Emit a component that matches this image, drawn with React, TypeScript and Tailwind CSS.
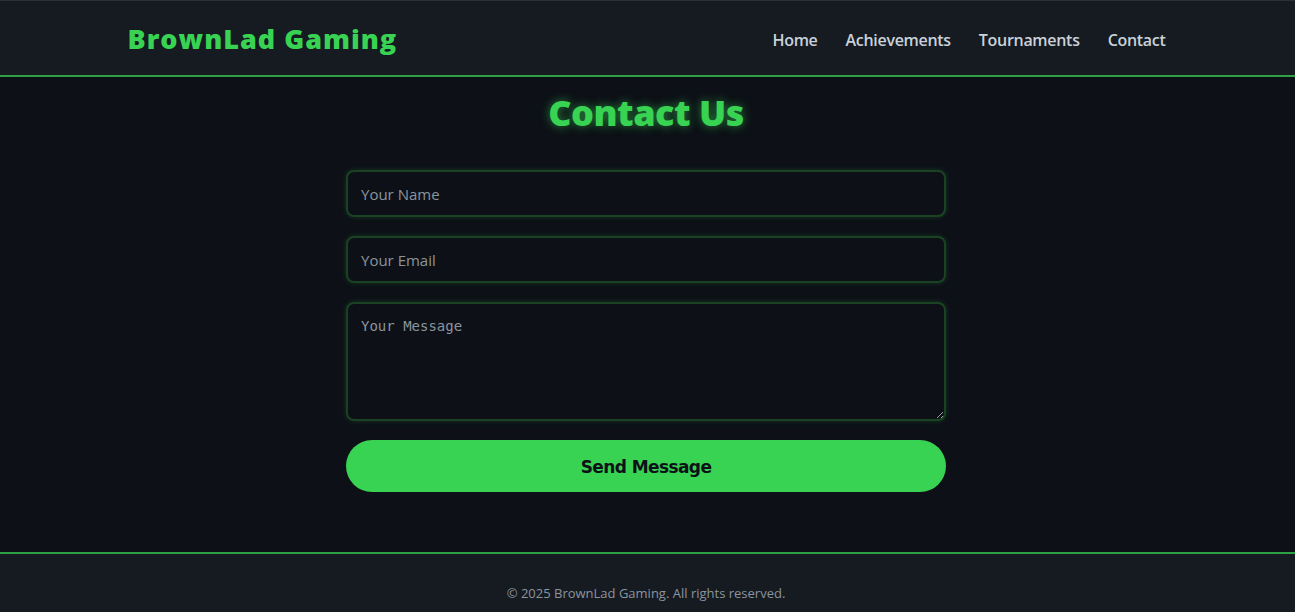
import React from 'react';

const links = ["Home", "Achievements", "Tournaments", "Contact"];

const field =
    "h-[47px] px-[13px] rounded-lg bg-[#0d1117] border-2 border-[#1a4223] text-[15px] placeholder:text-[#8b949e] outline-none shadow-[0_0_5px_rgba(46,160,67,0.25)]";

export default function App() {
    return (
        <div className="min-h-[612px] flex flex-col bg-[#0d1117] text-[#c9d1d9]" style={{ fontFamily: '"Open Sans", "Noto Sans", sans-serif' }}>
            <header className="bg-[#161b22] border-t border-t-[#2a3038] border-b-2 border-b-[#2ea043] h-[77px]">
                <div className="max-w-[1040px] mx-auto h-full flex items-center justify-between">
                    <h1 className="text-[27px] font-extrabold tracking-[1px] text-[#39d353] pt-[3px]">BrownLad Gaming</h1>
                    <nav className="flex gap-[28px] text-[16px] font-semibold text-[#c9d1d9] pt-[3px] pr-[2px]">
                        {links.map((l) => (
                            <a key={l} href="#" className="tracking-[-0.3px]">{l}</a>
                        ))}
                    </nav>
                </div>
            </header>

            <main className="flex-1 flex flex-col items-center pt-[14px] pb-[59px]">
                <h2 className="text-[36px] font-extrabold text-[#39d353] tracking-[-0.5px] leading-[44px] [text-shadow:0_0_10px_rgba(57,211,83,0.6)] mr-[3px]">Contact Us</h2>

                <form className="w-[600px] mt-[35px] flex flex-col gap-[19px] mr-[3px]">
                    <input type="text" placeholder="Your Name" className={field} />
                    <input type="email" placeholder="Your Email" className={field} />
                    <textarea
                        placeholder="Your Message"
                        className="h-[119px] px-[13px] py-[12px] rounded-lg bg-[#0d1117] border-2 border-[#1a4223] text-[14px] placeholder:text-[#8b949e] outline-none shadow-[0_0_5px_rgba(46,160,67,0.25)]"
                        style={{ fontFamily: '"DejaVu Sans Mono", monospace' }}
                    />
                    <button
                        type="button"
                        className="h-[52px] pt-[3px] rounded-full bg-[#39d353] text-[#0d1117] text-[17px] font-bold"
                        style={{ fontFamily: '"DejaVu Sans", sans-serif', letterSpacing: '-0.6px' }}
                    >
                        Send Message
                    </button>
                </form>
            </main>

            <footer className="bg-[#161b22] border-t-2 border-t-[#2ea043] h-[60px] flex items-end justify-center pb-[9px]">
                <p className="text-[13px] text-[#8b949e] mr-[3px]">© 2025 BrownLad Gaming. All rights reserved.</p>
            </footer>
        </div>
    );
}
